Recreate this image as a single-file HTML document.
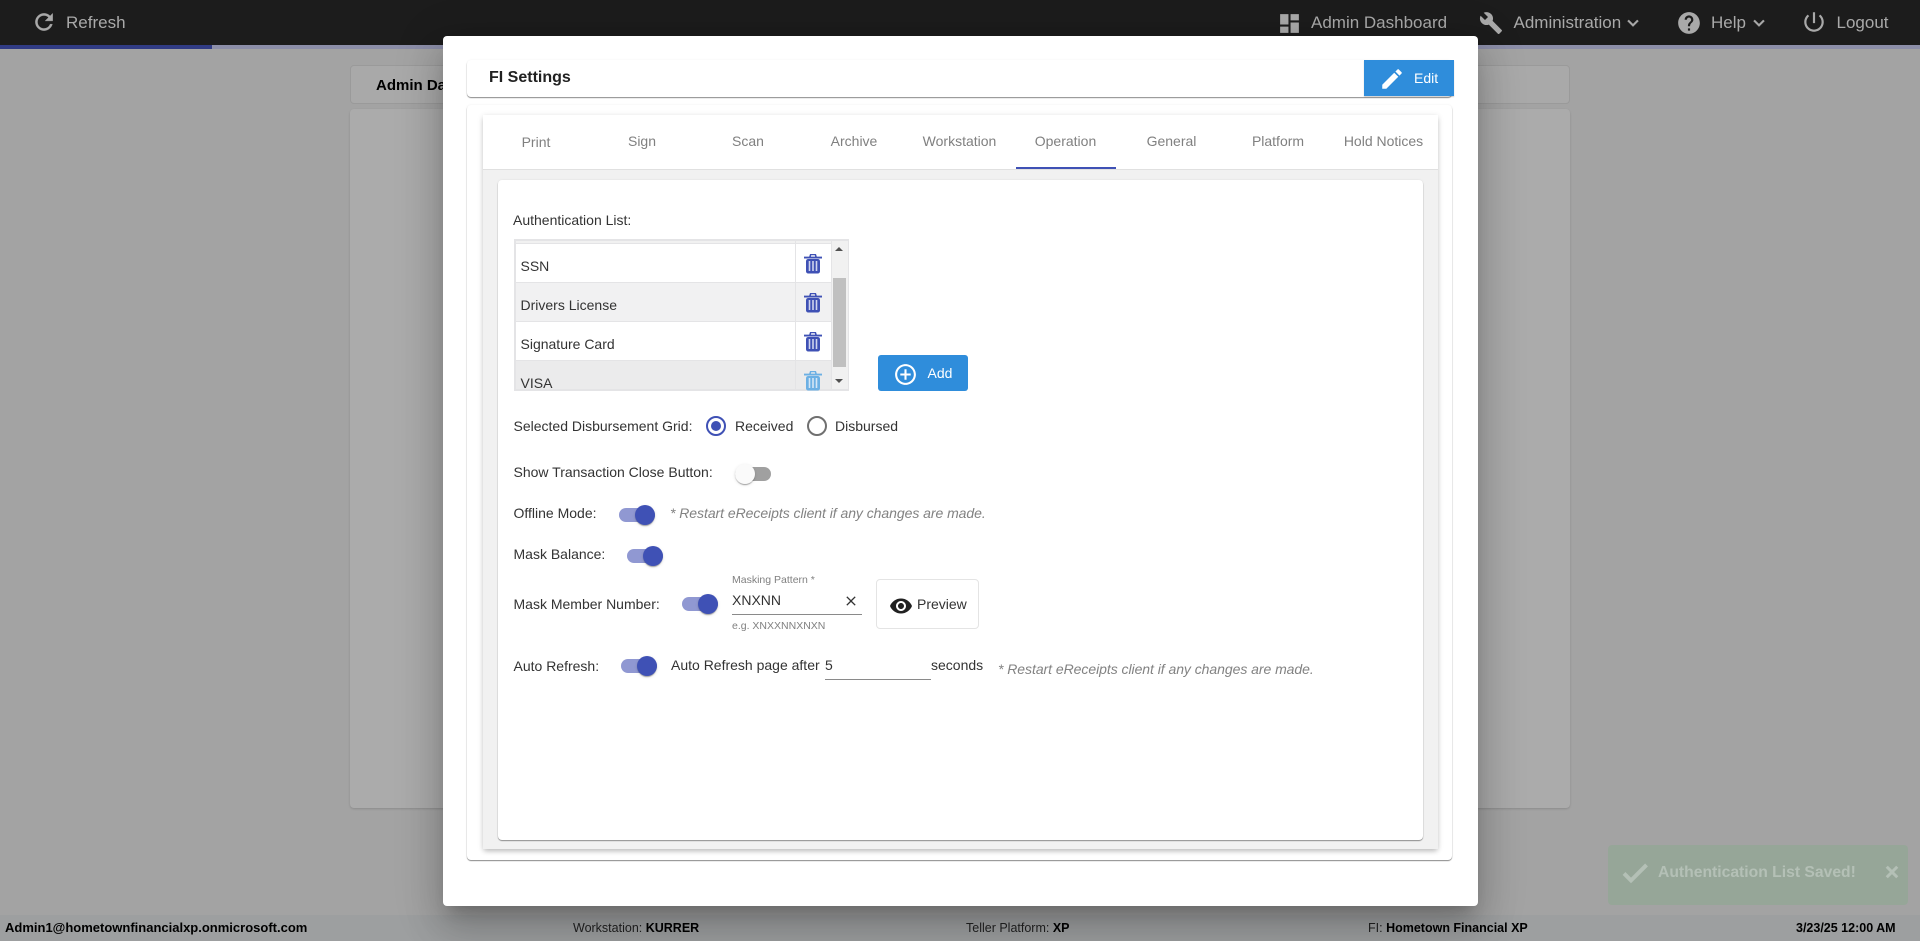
<!DOCTYPE html>
<html><head><meta charset="utf-8"><title>FI Settings</title>
<style>
html,body{margin:0;padding:0;width:1920px;height:941px;overflow:hidden;background:#a3a3a3;font-family:"Liberation Sans",Arial,sans-serif;font-size:14px;color:#333}
*{box-sizing:border-box}
.a{position:absolute}
.t{position:absolute;white-space:nowrap;line-height:20px;height:20px}
svg{position:absolute;display:block}
.nav{color:#a9a9a9;font-size:17px;line-height:24px;height:24px}
.tab{color:#808080;width:106px;text-align:center}
.tr{position:absolute;width:36px;height:14px;border-radius:7px;background:#9098d2}
.th{position:absolute;width:20px;height:20px;border-radius:50%;background:#3f51b5;box-shadow:0 2px 1px -1px rgba(0,0,0,.2),0 1px 1px 0 rgba(0,0,0,.14),0 1px 3px 0 rgba(0,0,0,.12);left:16px;top:-3px}
.g{color:#828282;font-style:italic;letter-spacing:-.05px}
.foot{font-size:12.5px;color:#222;line-height:20px}
.foot b{color:#000}
</style></head><body>

<!-- background page -->
<div class="a" style="left:0;top:0;width:1920px;height:45px;background:#1c1c1c"></div>
<div class="a" style="left:0;top:45px;width:1920px;height:4px;background:#8c8ea8"></div>
<div class="a" style="left:0;top:45px;width:212px;height:4px;background:#303b84"></div>

<svg style="left:31px;top:9px" width="26" height="26" viewBox="0 0 24 24" fill="#a9a9a9" stroke="#a9a9a9" stroke-width=".3"><path d="M17.65 6.35A7.958 7.958 0 0 0 12 4c-4.42 0-7.99 3.58-7.99 8s3.57 8 7.99 8c3.73 0 6.84-2.55 7.73-6h-2.08A5.99 5.99 0 0 1 12 18c-3.31 0-6-2.69-6-6s2.69-6 6-6c1.66 0 3.14.69 4.22 1.78L13 11h7V4l-2.35 2.35z"/></svg>
<div class="t nav" style="left:66px;top:11px">Refresh</div>

<svg style="left:1277px;top:11px" width="25" height="25" viewBox="0 0 24 24" fill="#a9a9a9"><path d="M3 13h8V3H3v10zm0 8h8v-6H3v6zm10 0h8V11h-8v10zm0-18v6h8V3h-8z"/></svg>
<div class="t nav" style="left:1311px;top:11px">Admin Dashboard</div>
<svg style="left:1479px;top:11px" width="24" height="24" viewBox="0 0 24 24" fill="#a9a9a9"><path d="M22.7 19l-9.1-9.1c.9-2.3.4-5-1.5-6.9-2-2-5-2.4-7.4-1.3L9 6 6 9 1.6 4.7C.4 7.1.9 10.1 2.9 12.1c1.9 1.9 4.6 2.4 6.9 1.5l9.1 9.1c.4.4 1 .4 1.4 0l2.3-2.3c.5-.4.5-1.1.1-1.4z"/></svg>
<div class="t nav" style="left:1513.5px;top:11px">Administration</div>
<svg style="left:1621.5px;top:12px" width="22" height="22" viewBox="0 0 24 24" fill="#a9a9a9" stroke="#a9a9a9" stroke-width=".4"><path d="M7.41 8.59L12 13.17l4.59-4.58L18 10l-6 6-6-6 1.41-1.41z"/></svg>
<svg style="left:1676px;top:10px" width="26" height="26" viewBox="0 0 24 24" fill="#a9a9a9"><path d="M12 2C6.48 2 2 6.48 2 12s4.48 10 10 10 10-4.48 10-10S17.52 2 12 2zm1 17h-2v-2h2v2zm2.07-7.75l-.9.92C13.45 12.9 13 13.5 13 15h-2v-.5c0-1.1.45-2.1 1.17-2.83l1.24-1.26c.37-.36.59-.86.59-1.41 0-1.1-.9-2-2-2s-2 .9-2 2H8c0-2.21 1.79-4 4-4s4 1.79 4 4c0 .88-.36 1.68-.93 2.25z"/></svg>
<div class="t nav" style="left:1711px;top:11px">Help</div>
<svg style="left:1747.5px;top:12px" width="22" height="22" viewBox="0 0 24 24" fill="#a9a9a9" stroke="#a9a9a9" stroke-width=".4"><path d="M7.41 8.59L12 13.17l4.59-4.58L18 10l-6 6-6-6 1.41-1.41z"/></svg>
<svg style="left:1801px;top:9px" width="26" height="26" viewBox="0 0 24 24" fill="#a9a9a9"><path d="M13 3h-2v10h2V3zm4.83 2.17l-1.42 1.42C17.99 7.86 19 9.81 19 12c0 3.87-3.13 7-7 7s-7-3.13-7-7c0-2.19 1.01-4.14 2.58-5.42L6.17 5.17C4.23 6.82 3 9.26 3 12c0 4.97 4.03 9 9 9s9-4.03 9-9c0-2.74-1.23-5.18-3.17-6.83z"/></svg>
<div class="t nav" style="left:1836.5px;top:11px">Logout</div>

<div class="a" style="left:350px;top:65px;width:1220px;height:39px;background:#a9a9a9;border:1px solid #9a9a9a;border-radius:4px"></div>
<div class="t" style="left:376px;top:76px;font-weight:bold;font-size:15px;color:#000">Admin Dashboard</div>
<div class="a" style="left:350px;top:109px;width:1220px;height:699px;background:#ababab;border-radius:4px;box-shadow:0 1px 2px rgba(0,0,0,.15)"></div>

<!-- status bar -->
<div class="a" style="left:0;top:915px;width:1920px;height:26px;background:#9d9fa0"></div>
<div class="t foot" style="left:5px;top:918px;font-weight:bold;color:#000;font-size:13px">Admin1@hometownfinancialxp.onmicrosoft.com</div>
<div class="t foot" style="left:573px;top:918px">Workstation: <b>KURRER</b></div>
<div class="t foot" style="left:966px;top:918px">Teller Platform: <b>XP</b></div>
<div class="t foot" style="left:1368px;top:918px">FI: <b>Hometown Financial XP</b></div>
<div class="t foot" style="left:1796px;top:918px;font-weight:bold;color:#000">3/23/25 12:00 AM</div>

<!-- toast -->
<div class="a" style="left:1608px;top:845px;width:300px;height:60px;background:#96a698;border-radius:4px"></div>
<svg style="left:1619px;top:857px" width="32" height="32" viewBox="0 0 24 24" fill="#b4c0b6" stroke="#b4c0b6" stroke-width="1"><path d="M9 16.17L4.83 12l-1.41 1.41L9 19 21 7l-1.41-1.41z"/></svg>
<div class="t" style="left:1658px;top:863px;font-weight:bold;font-size:15.7px;color:#b4c0b6">Authentication List Saved!</div>
<svg style="left:1883px;top:863px" width="18" height="18" viewBox="0 0 24 24" fill="#b4c0b6" stroke="#b4c0b6" stroke-width="2"><path d="M19 6.41L17.59 5 12 10.59 6.41 5 5 6.41 10.59 12 5 17.59 6.41 19 12 13.41 17.59 19 19 17.59 13.41 12z"/></svg>

<!-- modal -->
<div class="a" style="left:443px;top:36px;width:1035px;height:870px;background:#fff;border-radius:4px;box-shadow:0 11px 15px -7px rgba(0,0,0,.2),0 24px 38px 3px rgba(0,0,0,.14),0 9px 46px 8px rgba(0,0,0,.12)"></div>

<!-- header card -->
<div class="a" style="left:467px;top:60px;width:985px;height:37px;background:#fff;border-radius:4px;box-shadow:0 1px 1px rgba(0,0,0,.45),0 0 2px rgba(0,0,0,.05)"></div>
<div class="t" style="left:489px;top:68px;font-weight:bold;font-size:16px;color:#212121">FI Settings</div>
<div class="a" style="left:1364px;top:60px;width:90px;height:36px;background:#2f8ddb;box-shadow:0 1px 1px rgba(0,0,0,.2)"></div>
<svg style="left:1379px;top:66px" width="26" height="26" viewBox="0 0 24 24" fill="#fff"><path d="M3 17.25V21h3.75L17.81 9.94l-3.75-3.75L3 17.25zM20.71 7.04a1 1 0 0 0 0-1.41l-2.34-2.34a1 1 0 0 0-1.41 0l-1.83 1.83 3.75 3.75 1.83-1.83z"/></svg>
<div class="t" style="left:1414px;top:68px;color:#fff;font-size:14px">Edit</div>

<!-- outer card -->
<div class="a" style="left:467px;top:105px;width:985px;height:755px;background:#fff;border-radius:4px;box-shadow:0 1px 1px rgba(0,0,0,.45),0 0 2px rgba(0,0,0,.07)"></div>
<!-- tabs card -->
<div class="a" style="left:483px;top:115px;width:955px;height:734px;background:#f1f1f1;box-shadow:0 3px 5px -1px rgba(0,0,0,.2),0 1px 6px 0 rgba(0,0,0,.12)"></div>
<div class="a" style="left:483px;top:115px;width:955px;height:55px;background:#fff;border-bottom:1px solid #e0e0e0"></div>
<div class="t tab" style="left:483px;top:132px">Print</div>
<div class="t tab" style="left:589px;top:131px">Sign</div>
<div class="t tab" style="left:695px;top:131px">Scan</div>
<div class="t tab" style="left:801px;top:131px">Archive</div>
<div class="t tab" style="left:906.5px;top:131px">Workstation</div>
<div class="t tab" style="left:1012.5px;top:131px">Operation</div>
<div class="t tab" style="left:1118.5px;top:131px">General</div>
<div class="t tab" style="left:1225px;top:131px">Platform</div>
<div class="t tab" style="left:1330.5px;top:131px">Hold Notices</div>
<div class="a" style="left:1016px;top:167px;width:100px;height:2px;background:#3f51b5"></div>

<!-- inner white card -->
<div class="a" style="left:498px;top:180px;width:925px;height:660px;background:#fff;border-radius:4px;box-shadow:0 1px 1px rgba(0,0,0,.4),0 0 2px rgba(0,0,0,.08)"></div>

<div class="t" style="left:513px;top:210px">Authentication List:</div>

<!-- table -->
<div class="a" style="left:514px;top:239px;width:335px;height:152px;background:#f1f1f1;border:2px solid #e4e4e6;border-right:1px solid #e4e4e6;overflow:hidden">
 <div class="a" style="left:0;top:2px;width:279px;height:40px;background:#fff;border-top:1px solid #e4e4e6;border-bottom:1px solid #e4e4e6"></div>
 <div class="a" style="left:0;top:42px;width:279px;height:39px;background:#f1f1f2;border-bottom:1px solid #e4e4e6"></div>
 <div class="a" style="left:0;top:81px;width:279px;height:39px;background:#fff;border-bottom:1px solid #e4e4e6"></div>
 <div class="a" style="left:0;top:120px;width:279px;height:31px;background:#ebebec"></div>
 <div class="a" style="left:279px;top:2px;width:36px;height:40px;background:#fff;border-top:1px solid #e4e4e6;border-bottom:1px solid #e4e4e6"></div>
 <div class="a" style="left:279px;top:42px;width:36px;height:39px;background:#f1f1f2;border-bottom:1px solid #e4e4e6"></div>
 <div class="a" style="left:279px;top:81px;width:36px;height:39px;background:#fff;border-bottom:1px solid #e4e4e6"></div>
 <div class="a" style="left:279px;top:120px;width:36px;height:31px;background:#ebebec"></div>
 <div class="a" style="left:279px;top:0;width:1px;height:150px;background:#e4e4e6"></div>
 <div class="a" style="left:315px;top:0;width:1px;height:150px;background:#e4e4e6"></div>
 <div class="a" style="left:317px;top:37px;width:13px;height:89px;background:#c0c0c0"></div>
</div>
<div class="a" style="left:835px;top:247px;width:0;height:0;border-left:4px solid transparent;border-right:4px solid transparent;border-bottom:4px solid #505050"></div>
<div class="a" style="left:835px;top:379px;width:0;height:0;border-left:4px solid transparent;border-right:4px solid transparent;border-top:4px solid #505050"></div>

<div class="t" style="left:520.5px;top:256px">SSN</div>
<div class="t" style="left:520.5px;top:295px">Drivers License</div>
<div class="t" style="left:520.5px;top:334px">Signature Card</div>
<div class="a" style="left:514px;top:370px;width:279px;height:20px;overflow:hidden"><div class="t" style="left:6.5px;top:3px">VISA</div></div>

<svg style="left:804px;top:254px" width="18" height="20" viewBox="0 0 18 20"><path fill="#3f51b5" d="M6 0h6l.8 2.6H18v1.9H0V2.6h5.2zM7.2 1.3l-.3 1.3h4.2l-.3-1.3z"/><rect x="2" y="5" width="14" height="14.5" rx="2.2" fill="#3f51b5"/><path d="M5.5 7v10M9 7v10M12.5 7v10" stroke="#cfd4ee" stroke-width="1.6"/></svg>
<svg style="left:804px;top:293px" width="18" height="20" viewBox="0 0 18 20"><path fill="#3f51b5" d="M6 0h6l.8 2.6H18v1.9H0V2.6h5.2zM7.2 1.3l-.3 1.3h4.2l-.3-1.3z"/><rect x="2" y="5" width="14" height="14.5" rx="2.2" fill="#3f51b5"/><path d="M5.5 7v10M9 7v10M12.5 7v10" stroke="#cfd4ee" stroke-width="1.6"/></svg>
<svg style="left:804px;top:332px" width="18" height="20" viewBox="0 0 18 20"><path fill="#3f51b5" d="M6 0h6l.8 2.6H18v1.9H0V2.6h5.2zM7.2 1.3l-.3 1.3h4.2l-.3-1.3z"/><rect x="2" y="5" width="14" height="14.5" rx="2.2" fill="#3f51b5"/><path d="M5.5 7v10M9 7v10M12.5 7v10" stroke="#cfd4ee" stroke-width="1.6"/></svg>
<svg style="left:804px;top:371px" width="18" height="20" viewBox="0 0 18 20"><path fill="#6cb0e4" d="M6 0h6l.8 2.6H18v1.9H0V2.6h5.2zM7.2 1.3l-.3 1.3h4.2l-.3-1.3z"/><rect x="2" y="5" width="14" height="14.5" rx="2.2" fill="#6cb0e4"/><path d="M5.5 7v10M9 7v10M12.5 7v10" stroke="#d4e6f6" stroke-width="1.6"/></svg>

<!-- add -->
<div class="a" style="left:878px;top:355px;width:90px;height:36px;background:#2f8ddb;border-radius:3px"></div>
<svg style="left:893px;top:362px" width="25" height="25" viewBox="0 0 24 24" fill="#fff"><path d="M13 7h-2v4H7v2h4v4h2v-4h4v-2h-4V7zm-1-5C6.48 2 2 6.48 2 12s4.48 10 10 10 10-4.48 10-10S17.52 2 12 2zm0 18c-4.41 0-8-3.59-8-8s3.59-8 8-8 8 3.59 8 8-3.59 8-8 8z"/></svg>
<div class="t" style="left:927.5px;top:363px;color:#fff">Add</div>

<!-- disbursement -->
<div class="t" style="left:513.5px;top:416px">Selected Disbursement Grid:</div>
<div class="a" style="left:706px;top:416px;width:20px;height:20px;border-radius:50%;border:2px solid #3f51b5"></div>
<div class="a" style="left:711px;top:421px;width:10px;height:10px;border-radius:50%;background:#3f51b5"></div>
<div class="t" style="left:735px;top:416px">Received</div>
<div class="a" style="left:807px;top:416px;width:20px;height:20px;border-radius:50%;border:2px solid #707070"></div>
<div class="t" style="left:835px;top:416px">Disbursed</div>

<!-- show close -->
<div class="t" style="left:513.5px;top:462px">Show Transaction Close Button:</div>
<div class="tr" style="left:735px;top:467px;background:#a0a0a0"><div class="th" style="left:0;background:#fafafa"></div></div>

<!-- offline -->
<div class="t" style="left:513.5px;top:503px">Offline Mode:</div>
<div class="tr" style="left:619px;top:508px"><div class="th"></div></div>
<div class="t g" style="left:670px;top:503px">* Restart eReceipts client if any changes are made.</div>

<!-- mask balance -->
<div class="t" style="left:513.5px;top:544px">Mask Balance:</div>
<div class="tr" style="left:627px;top:549px"><div class="th"></div></div>

<!-- mask member -->
<div class="t" style="left:513.5px;top:594px">Mask Member Number:</div>
<div class="tr" style="left:682px;top:597px"><div class="th"></div></div>
<div class="t" style="left:732px;top:570px;font-size:10.5px;color:#808080">Masking Pattern *</div>
<div class="t" style="left:732px;top:590px;color:#333">XNXNN</div>
<svg style="left:843px;top:593px" width="16" height="16" viewBox="0 0 24 24" fill="#333"><path d="M19 6.41L17.59 5 12 10.59 6.41 5 5 6.41 10.59 12 5 17.59 6.41 19 12 13.41 17.59 19 19 17.59 13.41 12z"/></svg>
<div class="a" style="left:732px;top:614px;width:130px;height:1px;background:#8a8a8a"></div>
<div class="t" style="left:732px;top:616px;font-size:10.5px;color:#808080">e.g. XNXXNNXNXN</div>
<div class="a" style="left:876px;top:579px;width:103px;height:50px;border:1px solid #e4e4e4;border-radius:4px;background:#fff"></div>
<svg style="left:889px;top:594px" width="24" height="24" viewBox="0 0 24 24" fill="#212121"><path d="M12 4.5C7 4.5 2.73 7.61 1 12c1.73 4.39 6 7.5 11 7.5s9.27-3.11 11-7.5c-1.73-4.39-6-7.5-11-7.5zM12 17c-2.76 0-5-2.24-5-5s2.24-5 5-5 5 2.24 5 5-2.24 5-5 5zm0-8c-1.66 0-3 1.34-3 3s1.34 3 3 3 3-1.34 3-3-1.34-3-3-3z"/></svg>
<div class="t" style="left:917px;top:594px">Preview</div>

<!-- auto refresh -->
<div class="t" style="left:513.5px;top:656px">Auto Refresh:</div>
<div class="tr" style="left:621px;top:659px"><div class="th"></div></div>
<div class="t" style="left:671px;top:655px">Auto Refresh page after</div>
<div class="t" style="left:825px;top:655px">5</div>
<div class="a" style="left:825px;top:679px;width:106px;height:1px;background:#8a8a8a"></div>
<div class="t" style="left:931px;top:655px">seconds</div>
<div class="t g" style="left:998px;top:659px">* Restart eReceipts client if any changes are made.</div>

</body></html>
